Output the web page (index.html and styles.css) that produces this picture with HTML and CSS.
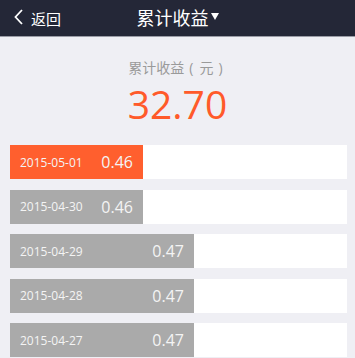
FILE: index.html
```html
<!DOCTYPE html>
<html lang="zh-CN">
<head>
    <meta charset="UTF-8">
    <meta name="viewport" content="width=device-width, initial-scale=1.0">
    <link rel="stylesheet" href="styles.css">
    <title>累计收益</title>
</head>
<body>
    <div class="header">
        <a class="back" href="#">
            <svg class="back-icon" width="11" height="16" viewBox="0 0 11 16">
                <path d="M9 1 L2.5 8 L9 15" fill="none" stroke="#fff" stroke-width="1.8"/>
            </svg>
            <span>返回</span>
        </a>
        <div class="title">累计收益<span class="caret"></span></div>
    </div>

    <div class="summary">
        <div class="summary-label">累计收益<span class="paren">(</span>元<span class="paren">)</span></div>
        <div class="summary-value">32.70</div>
    </div>

    <div class="list">
        <div class="row">
            <div class="bar bar-active" style="width: 133px">
                <span class="date">2015-05-01</span>
                <span class="amount">0.46</span>
            </div>
        </div>
        <div class="row">
            <div class="bar" style="width: 133px">
                <span class="date">2015-04-30</span>
                <span class="amount">0.46</span>
            </div>
        </div>
        <div class="row">
            <div class="bar" style="width: 184px">
                <span class="date">2015-04-29</span>
                <span class="amount">0.47</span>
            </div>
        </div>
        <div class="row">
            <div class="bar" style="width: 184px">
                <span class="date">2015-04-28</span>
                <span class="amount">0.47</span>
            </div>
        </div>
        <div class="row">
            <div class="bar" style="width: 184px">
                <span class="date">2015-04-27</span>
                <span class="amount">0.47</span>
            </div>
        </div>
    </div>
</body>
</html>
```

FILE: styles.css
```css
body {
    margin: 0;
    background-color: #efeff4;
    font-family: "Open Sans", "Noto Sans CJK SC", sans-serif;
    overflow: hidden;
}

.header {
    position: relative;
    height: 36px;
    background-color: #242737;
    border-bottom: 1px solid #9a9ca6;
    display: flex;
    align-items: center;
    justify-content: center;
}

.back {
    position: absolute;
    left: 13px;
    top: 0;
    height: 36px;
    display: flex;
    align-items: center;
    color: #fff;
    text-decoration: none;
    font-size: 15px;
}

.back-icon {
    margin-right: 7px;
    margin-top: -3px;
}

.title {
    color: #fff;
    font-size: 18px;
    display: flex;
    align-items: center;
    margin-top: -2px;
}

.caret {
    width: 0;
    height: 0;
    border-left: 4.5px solid transparent;
    border-right: 4.5px solid transparent;
    border-top: 7px solid #fff;
    margin-left: 2px;
    margin-top: -2px;
}

.summary {
    text-align: center;
    padding-top: 21px;
    height: 87px;
}

.summary-label {
    color: #9a9a9a;
    font-size: 14px;
    line-height: 20px;
    padding-left: 2px;
}

.paren {
    margin: 0 6px 0 5px;
}

.summary-value {
    color: #ff5a2a;
    font-size: 39px;
    line-height: 44px;
    margin-top: 4px;
}

.list {
    margin: 0 8px 0 10px;
}

.row {
    height: 34px;
    background-color: #fff;
    margin-bottom: 10.5px;
}

.bar {
    height: 100%;
    background-color: #aaaaaa;
    display: flex;
    align-items: center;
    justify-content: space-between;
    padding: 0 10px;
    box-sizing: border-box;
    color: #f4f4f4;
}

.bar-active {
    background-color: #ff5f2e;
}

.date {
    font-size: 12px;
}

.amount {
    font-size: 16px;
}
```
